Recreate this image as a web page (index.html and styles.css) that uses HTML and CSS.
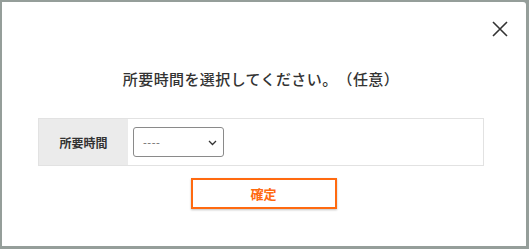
FILE: index.html
```html
<!DOCTYPE html>
<html lang="ja">
<head>
<meta charset="utf-8">
<link rel="stylesheet" href="styles.css">
</head>
<body>
<div class="modal">
  <div class="top">
    <button class="close" aria-label="閉じる">
      <svg width="18" height="18" viewBox="0 0 18 18"><path d="M2 2L16 16M16 2L2 16" stroke="#333" stroke-width="1.6" fill="none"/></svg>
    </button>
  </div>
  <h2 class="title">所要時間を選択してください。（任意）</h2>
  <div class="table">
    <div class="label">所要時間</div>
    <div class="field">
      <div class="select">
        <span class="val">----</span>
        <svg width="9" height="6" viewBox="0 0 9 6"><path d="M1 1L4.5 4.5L8 1" stroke="#333" stroke-width="1.3" fill="none"/></svg>
      </div>
    </div>
  </div>
  <div class="actions">
    <button class="confirm">確定</button>
  </div>
</div>
</body>
</html>
```
FILE: styles.css
```css
html, body {
  margin: 0;
  padding: 0;
}
body {
  background: #959e9a;
  width: 529px;
  height: 249px;
  padding: 2px 3px 3px 2px;
  box-sizing: border-box;
  font-family: "Noto Sans CJK JP", "Noto Sans", sans-serif;
  color: #333;
  text-spacing-trim: space-all;
}
.modal {
  background: #fff;
  height: 100%;
  border-radius: 0 3px 0 0;
  box-sizing: border-box;
  padding: 0 42px 0 36px;
}
.top {
  display: flex;
  justify-content: flex-end;
  padding-top: 18px;
  margin-right: -25px;
}
.close {
  border: 0;
  background: none;
  padding: 0;
  width: 18px;
  height: 18px;
  display: block;
  cursor: pointer;
}
.close svg { display: block; }
.title {
  margin: 30px 0 0 0;
  font-size: 15px;
  font-weight: 500;
  text-align: center;
  line-height: 22px;
  letter-spacing: 0.4px;
  color: #333;
  text-spacing-trim: space-all;
}
.table {
  margin-top: 28px;
  display: flex;
  border: 1px solid #e2e2e2;
  height: 48px;
  box-sizing: border-box;
}
.label {
  width: 89px;
  background: #ebebeb;
  display: flex;
  align-items: center;
  justify-content: center;
  font-size: 12px;
  font-weight: 700;
  color: #333;
}
.field {
  flex: 1;
  display: flex;
  align-items: center;
  padding-left: 5px;
}
.select {
  width: 91px;
  height: 30px;
  box-sizing: border-box;
  border: 1px solid #8a8a8a;
  border-radius: 3px;
  display: flex;
  align-items: center;
  justify-content: space-between;
  padding: 0 6px 0 9px;
}
.val {
  font-size: 11px;
  color: #666;
  letter-spacing: 0.5px;
}
.select svg { display: block; margin-top: 2px; }
.actions {
  display: flex;
  justify-content: center;
  margin-top: 12px;
  padding-left: 5px;
}
.confirm {
  width: 146px;
  height: 31px;
  background: #fff;
  border: 2px solid #ff6a10;
  color: #ff6a10;
  font-family: "Noto Sans CJK JP", sans-serif;
  font-size: 13px;
  font-weight: 700;
  box-shadow: 0 1px 2px rgba(0,0,0,0.25);
  padding: 0;
  cursor: pointer;
}
```
